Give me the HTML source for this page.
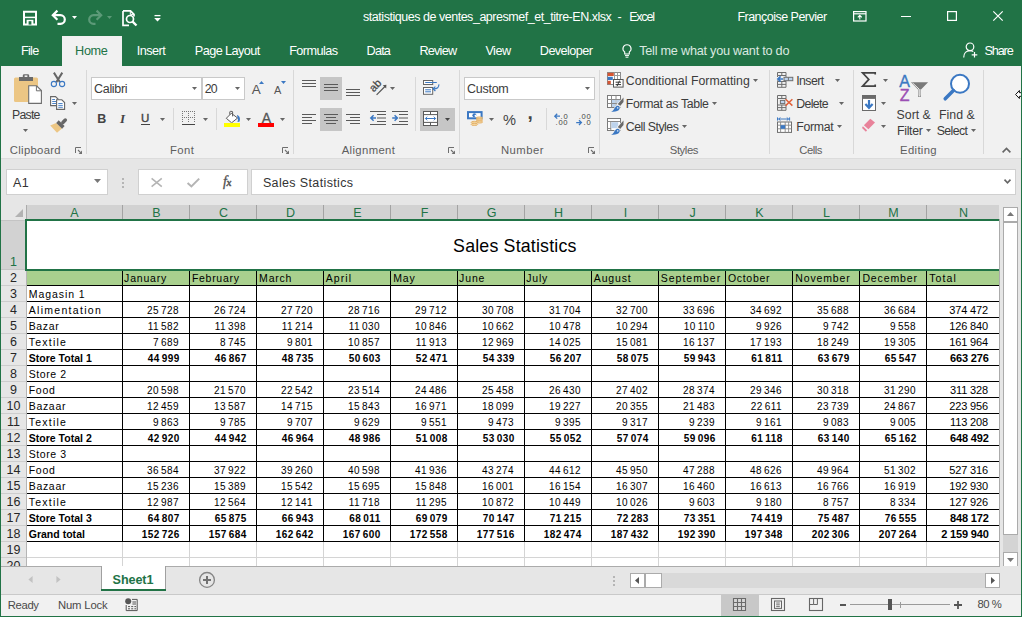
<!DOCTYPE html>
<html><head><meta charset="utf-8"><title>Excel</title>
<style>
*{box-sizing:border-box;margin:0;padding:0}
html,body{width:1022px;height:617px;overflow:hidden;background:#e6e6e6;font-family:"Liberation Sans",sans-serif;}
#w{position:relative;width:1022px;height:617px;overflow:hidden;background:#e6e6e6}
.abs{position:absolute}
svg{overflow:visible}
.t{position:absolute;white-space:nowrap;line-height:16px}
.sep{position:absolute;width:1px;background:#d8d8d8}
.ch{position:absolute;top:205px;height:14px;background:#d2d2d2;color:#217346;font-size:12.5px;text-align:center;line-height:17px;padding-left:2px}
.rh{position:absolute;left:1px;width:25px;color:#262626;font-size:12.5px;text-align:center;line-height:17px;height:16px;background:#e6e6e6}
.c{position:absolute;font-size:10.5px;color:#000;white-space:nowrap;line-height:16px;height:16px}
.n{text-align:right;font-size:10px;letter-spacing:.44px;line-height:17px}
.nn{text-align:right;font-size:11px;letter-spacing:-.1px}
.g{display:inline-block;width:2px}
.g2{display:inline-block;width:2.6px}
.b{font-weight:bold}
</style></head><body><div id="w">

<div class="abs" style="left:0px;top:0px;width:1022px;height:66px;background:#217346;"></div>
<div class="abs" style="left:62px;top:36px;width:60px;height:30px;background:#f1f1f1;"></div>
<svg class="abs" style="left:23px;top:11px" width="14" height="14" viewBox="0 0 14 14"><path d="M1 0.8H13V13.4H1Z" fill="none" stroke="#fff" stroke-width="2"/><path d="M2 6.4H12" stroke="#fff" stroke-width="1.5"/><path d="M3.6 13.6V8.8H10.4V13.6Z" fill="#fff"/><rect x="5.6" y="10.2" width="2.8" height="3.4" fill="#217346"/></svg>
<svg class="abs" style="left:51px;top:10px" width="16" height="15" viewBox="0 0 16 15"><path d="M2 5.2H9.5A4.3 4.3 0 0 1 9.5 13.8H6.5" fill="none" stroke="#fff" stroke-width="2.2"/><path d="M6.4 0.6L1.8 5.2L6.4 9.8" fill="none" stroke="#fff" stroke-width="2.2"/></svg>
<svg class="abs" style="left:72px;top:16px" width="5" height="3" viewBox="0 0 5 3"><path d="M0 0H5L2.5 3Z" fill="#fff"/></svg>
<svg class="abs" style="left:87px;top:10px" width="16" height="15" viewBox="0 0 16 15"><path d="M14 5.2H6.5A4.3 4.3 0 0 0 6.5 13.8H8.5" fill="none" stroke="#5c9a78" stroke-width="2.2"/><path d="M9.6 0.6L14.2 5.2L9.6 9.8" fill="none" stroke="#5c9a78" stroke-width="2.2"/></svg>
<svg class="abs" style="left:107px;top:16px" width="5" height="3" viewBox="0 0 5 3"><path d="M0 0H5L2.5 3Z" fill="#5c9a78"/></svg>
<svg class="abs" style="left:122px;top:10px" width="16" height="17" viewBox="0 0 16 17"><path d="M1 0.9H8.5L12 4.4V6.5M1 0.9V15.3H7" fill="none" stroke="#fff" stroke-width="1.7"/><path d="M8.3 0.9V4.4H11.8" fill="none" stroke="#fff" stroke-width="1"/><circle cx="8" cy="9" r="3.5" fill="none" stroke="#fff" stroke-width="1.7"/><path d="M10.6 11.6L14.5 15.5" stroke="#fff" stroke-width="2.3"/></svg>
<svg class="abs" style="left:154px;top:15px" width="7" height="7" viewBox="0 0 7 7"><path d="M0.5 0.6H6.5" stroke="#fff" stroke-width="1.3"/><path d="M0.2 3H6.8L3.5 6.4Z" fill="#fff"/></svg>
<div class="t" style="left:363.10px;top:9px;font-size:12.5px;color:#fff;letter-spacing:-0.473px;line-height:16px;height:16px;">statistiques de ventes_apresmef_et_titre-EN.xlsx</div>
<div class="t" style="left:617.40px;top:9px;font-size:12.5px;color:#fff;letter-spacing:0.000px;line-height:16px;height:16px;">-</div>
<div class="t" style="left:629.20px;top:9px;font-size:12.5px;color:#fff;letter-spacing:-1.212px;line-height:16px;height:16px;">Excel</div>
<div class="t" style="left:737.40px;top:9px;font-size:12.5px;color:#fff;letter-spacing:-0.515px;line-height:16px;height:16px;">Françoise Pervier</div>
<svg class="abs" style="left:853px;top:11px" width="14" height="11" viewBox="0 0 14 11"><rect x="0.6" y="0.6" width="12.4" height="9.4" fill="none" stroke="#fff" stroke-width="1.2"/><path d="M0.6 2.8H13" stroke="#fff" stroke-width="1.2"/><path d="M6.8 8.5V4.6M4.8 6.4L6.8 4.4L8.8 6.4" fill="none" stroke="#fff" stroke-width="1.1"/></svg>
<div class="abs" style="left:901px;top:16px;width:10px;height:1px;background:#fff;"></div>
<svg class="abs" style="left:947px;top:11px" width="10" height="10" viewBox="0 0 10 10"><rect x="0.6" y="0.6" width="8.8" height="8.8" fill="none" stroke="#fff" stroke-width="1.2"/></svg>
<svg class="abs" style="left:993px;top:11px" width="10" height="10" viewBox="0 0 10 10"><path d="M0.3 0.3L9.7 9.7M9.7 0.3L0.3 9.7" stroke="#fff" stroke-width="1.2"/></svg>
<div class="t" style="left:20.90px;top:43px;font-size:12.7px;color:#fff;letter-spacing:-0.715px;line-height:16px;height:16px;">File</div>
<div class="t" style="left:75.10px;top:43px;font-size:12.7px;color:#217346;letter-spacing:-0.353px;line-height:16px;height:16px;">Home</div>
<div class="t" style="left:136.80px;top:43px;font-size:12.7px;color:#fff;letter-spacing:-0.569px;line-height:16px;height:16px;">Insert</div>
<div class="t" style="left:194.80px;top:43px;font-size:12.7px;color:#fff;letter-spacing:-0.580px;line-height:16px;height:16px;">Page Layout</div>
<div class="t" style="left:289.20px;top:43px;font-size:12.7px;color:#fff;letter-spacing:-0.573px;line-height:16px;height:16px;">Formulas</div>
<div class="t" style="left:366.60px;top:43px;font-size:12.7px;color:#fff;letter-spacing:-0.836px;line-height:16px;height:16px;">Data</div>
<div class="t" style="left:419.40px;top:43px;font-size:12.7px;color:#fff;letter-spacing:-0.784px;line-height:16px;height:16px;">Review</div>
<div class="t" style="left:485.40px;top:43px;font-size:12.7px;color:#fff;letter-spacing:-0.526px;line-height:16px;height:16px;">View</div>
<div class="t" style="left:539.80px;top:43px;font-size:12.7px;color:#fff;letter-spacing:-0.584px;line-height:16px;height:16px;">Developer</div>
<div class="t" style="left:639.20px;top:43px;font-size:12.7px;color:#dbe9e0;letter-spacing:-0.242px;line-height:16px;height:16px;">Tell me what you want to do</div>
<div class="t" style="left:984.40px;top:43px;font-size:12.7px;color:#fff;letter-spacing:-1.118px;line-height:16px;height:16px;">Share</div>
<svg class="abs" style="left:622px;top:44px" width="10" height="14" viewBox="0 0 10 14"><path d="M5 0.7A4 4 0 0 1 7.3 8V10H2.7V8A4 4 0 0 1 5 0.7Z" fill="none" stroke="#fff" stroke-width="1.1"/><path d="M3 11.6H7M3.6 13.2H6.4" stroke="#fff" stroke-width="1"/></svg>
<svg class="abs" style="left:963px;top:42px" width="16" height="16" viewBox="0 0 16 16"><circle cx="7" cy="4.8" r="3.8" fill="none" stroke="#fff" stroke-width="1.2"/><path d="M0.7 15.5C0.7 11 3.5 8.6 7 8.6C8.3 8.6 9.4 9 10.3 9.6" fill="none" stroke="#fff" stroke-width="1.2"/><path d="M11.5 10V15.6M8.7 12.8H14.3" stroke="#fff" stroke-width="1.2"/></svg>
<div class="abs" style="left:1px;top:66px;width:1020px;height:92px;background:#f1f1f1;"></div>
<div class="abs" style="left:1px;top:158px;width:1020px;height:1px;background:#dcdcdc;"></div>
<div class="sep" style="left:86px;top:70px;height:84px"></div>
<div class="sep" style="left:293px;top:70px;height:84px"></div>
<div class="sep" style="left:459px;top:70px;height:84px"></div>
<div class="sep" style="left:599px;top:70px;height:84px"></div>
<div class="sep" style="left:769px;top:70px;height:84px"></div>
<div class="sep" style="left:853px;top:70px;height:84px"></div>
<div class="sep" style="left:983px;top:70px;height:84px"></div>
<div class="sep" style="left:173px;top:108px;height:22px"></div>
<div class="sep" style="left:216px;top:108px;height:22px"></div>
<div class="sep" style="left:415px;top:77px;height:54px"></div>
<div class="sep" style="left:546px;top:108px;height:22px"></div>
<div class="t" style="left:9.80px;top:143px;font-size:11.3px;color:#5e5e5e;letter-spacing:0.306px;line-height:14px;height:14px;">Clipboard</div>
<div class="t" style="left:169.90px;top:143px;font-size:11.3px;color:#5e5e5e;letter-spacing:0.436px;line-height:14px;height:14px;">Font</div>
<div class="t" style="left:341.70px;top:143px;font-size:11.3px;color:#5e5e5e;letter-spacing:0.371px;line-height:14px;height:14px;">Alignment</div>
<div class="t" style="left:500.90px;top:143px;font-size:11.3px;color:#5e5e5e;letter-spacing:0.506px;line-height:14px;height:14px;">Number</div>
<div class="t" style="left:669.80px;top:143px;font-size:11.3px;color:#5e5e5e;letter-spacing:-0.430px;line-height:14px;height:14px;">Styles</div>
<div class="t" style="left:799.20px;top:143px;font-size:11.3px;color:#5e5e5e;letter-spacing:-0.449px;line-height:14px;height:14px;">Cells</div>
<div class="t" style="left:900.10px;top:143px;font-size:11.3px;color:#5e5e5e;letter-spacing:0.328px;line-height:14px;height:14px;">Editing</div>
<svg class="abs" style="left:75px;top:147px" width="7" height="7" viewBox="0 0 7 7"><path d="M0.5 6V0.5H6" fill="none" stroke="#6e6e6e" stroke-width="1"/><path d="M3 3L5.6 5.6" stroke="#6e6e6e" stroke-width="1.1"/><path d="M7 3.6V7H3.6Z" fill="#6e6e6e"/></svg>
<svg class="abs" style="left:282px;top:147px" width="7" height="7" viewBox="0 0 7 7"><path d="M0.5 6V0.5H6" fill="none" stroke="#6e6e6e" stroke-width="1"/><path d="M3 3L5.6 5.6" stroke="#6e6e6e" stroke-width="1.1"/><path d="M7 3.6V7H3.6Z" fill="#6e6e6e"/></svg>
<svg class="abs" style="left:448px;top:147px" width="7" height="7" viewBox="0 0 7 7"><path d="M0.5 6V0.5H6" fill="none" stroke="#6e6e6e" stroke-width="1"/><path d="M3 3L5.6 5.6" stroke="#6e6e6e" stroke-width="1.1"/><path d="M7 3.6V7H3.6Z" fill="#6e6e6e"/></svg>
<svg class="abs" style="left:588px;top:147px" width="7" height="7" viewBox="0 0 7 7"><path d="M0.5 6V0.5H6" fill="none" stroke="#6e6e6e" stroke-width="1"/><path d="M3 3L5.6 5.6" stroke="#6e6e6e" stroke-width="1.1"/><path d="M7 3.6V7H3.6Z" fill="#6e6e6e"/></svg>
<svg class="abs" style="left:14px;top:74px" width="29" height="31" viewBox="0 0 29 31"><rect x="0" y="3.5" width="24" height="24.5" rx="1.5" fill="#ecc684"/>
<path d="M5 6.9V3H8.8V1.6A1.4 1.4 0 0 1 10.2 0.2H13.8A1.4 1.4 0 0 1 15.2 1.6V3H19V6.9Z" fill="#6a6a6a"/><rect x="10.6" y="1.4" width="2.8" height="1.6" fill="#f1f1f1"/>
<path d="M14.7 11.8H22.6L27.4 16.6V29.4H14.7Z" fill="#fff" stroke="#6e6e6e" stroke-width="1.1"/><path d="M22.4 12V16.8H27.2" fill="none" stroke="#6e6e6e" stroke-width="1"/></svg>
<div class="t" style="left:12.10px;top:107px;font-size:12.3px;color:#3c3c3c;letter-spacing:-0.783px;line-height:16px;height:16px;">Paste</div>
<svg class="abs" style="left:23px;top:129px" width="5" height="3" viewBox="0 0 5 3"><path d="M0 0H5L2.5 3Z" fill="#666"/></svg>
<svg class="abs" style="left:50px;top:72px" width="16" height="15" viewBox="0 0 16 15"><path d="M3.9 0.6L9.9 10.2M12.3 0.6L6.3 10.2" stroke="#666" stroke-width="2" fill="none"/>
<circle cx="3.9" cy="12" r="2.6" fill="#f1f1f1" stroke="#3b78c3" stroke-width="1.1"/><circle cx="12.1" cy="12" r="2.6" fill="#f1f1f1" stroke="#3b78c3" stroke-width="1.1"/></svg>
<svg class="abs" style="left:50px;top:96px" width="16" height="14" viewBox="0 0 16 14"><path d="M0.6 0.6H5.5L8 3.1V9.6H0.6Z" fill="#fff" stroke="#666" stroke-width="1.1"/>
<path d="M2.2 3.5H5M2.2 5.5H6M2.2 7.5H6" stroke="#3b78c3" stroke-width="0.9"/>
<path d="M6.6 3.8H11.8L14.6 6.6V13.4H6.6Z" fill="#fff" stroke="#666" stroke-width="1.1"/>
<path d="M8.3 7.5H12.6M8.3 9.4H12.8M8.3 11.3H12.8" stroke="#3b78c3" stroke-width="0.9"/></svg>
<svg class="abs" style="left:72px;top:102px" width="5" height="3" viewBox="0 0 5 3"><path d="M0 0H5L2.5 3Z" fill="#666"/></svg>
<svg class="abs" style="left:50px;top:118px" width="17" height="15" viewBox="0 0 17 15"><path d="M6.1 5.1L12 10.6L7 14.8L0.2 7.5Z" fill="#ecc684"/>
<path d="M6.2 4.9L8.7 2.3L14.6 8.1L12.1 10.8Z" fill="#666"/>
<path d="M12.9 4.5L15.3 2.1" stroke="#666" stroke-width="3.5" stroke-linecap="round"/></svg>
<div class="abs" style="left:91px;top:77px;width:111px;height:23px;background:#fff;border:1px solid #c9c9c9"></div>
<div class="abs" style="left:202px;top:77px;width:43px;height:23px;background:#fff;border:1px solid #c9c9c9"></div>
<div class="t" style="left:94.10px;top:81px;font-size:12.5px;color:#3c3c3c;letter-spacing:-0.334px;line-height:16px;height:16px;">Calibri</div>
<svg class="abs" style="left:192px;top:87px" width="5" height="3" viewBox="0 0 5 3"><path d="M0 0H5L2.5 3Z" fill="#666"/></svg>
<div class="t" style="left:204.70px;top:81px;font-size:12.3px;color:#3c3c3c;letter-spacing:-0.800px;line-height:16px;height:16px;">20</div>
<svg class="abs" style="left:235px;top:87px" width="5" height="3" viewBox="0 0 5 3"><path d="M0 0H5L2.5 3Z" fill="#666"/></svg>
<div class="t" style="left:251.70px;top:81px;font-size:13.5px;color:#555;letter-spacing:0.000px;line-height:17px;height:17px;">A</div>
<svg class="abs" style="left:259px;top:81px" width="5" height="3" viewBox="0 0 5 3"><path d="M0 3H5L2.5 0Z" fill="#3b78c3"/></svg>
<div class="t" style="left:274.00px;top:83px;font-size:11px;color:#555;letter-spacing:0.000px;line-height:14px;height:14px;">A</div>
<svg class="abs" style="left:281px;top:81px" width="5" height="3" viewBox="0 0 5 3"><path d="M0 0H5L2.5 3Z" fill="#3b78c3"/></svg>
<div class="t" style="left:97.30px;top:111px;font-size:12.5px;color:#444;letter-spacing:0.000px;line-height:16px;height:16px;font-weight:bold;">B</div>
<div class="t" style="left:119.90px;top:111px;font-size:12px;color:#444;letter-spacing:0.000px;line-height:16px;height:16px;font-style:italic;font-family:'Liberation Serif',serif;font-weight:bold;font-size:13px;">I</div>
<div class="t" style="left:140.90px;top:111px;font-size:11.5px;color:#444;letter-spacing:0.000px;line-height:14px;height:14px;-webkit-text-stroke:0.4px #444;">U</div>
<div class="abs" style="left:141px;top:124px;width:9px;height:1px;background:#444;"></div>
<svg class="abs" style="left:160px;top:118px" width="5" height="3" viewBox="0 0 5 3"><path d="M0 0H5L2.5 3Z" fill="#666"/></svg>
<svg class="abs" style="left:182px;top:111px" width="14" height="14" viewBox="0 0 14 14"><path d="M0 0.5H13M0 6.5H13M0.5 0V12M6.5 0V12M12.5 0V12" stroke="#777" stroke-width="1" stroke-dasharray="1 1" fill="none" shape-rendering="crispEdges"/><path d="M0 13.5H13" stroke="#444" stroke-width="1" shape-rendering="crispEdges"/></svg>
<svg class="abs" style="left:203px;top:118px" width="5" height="3" viewBox="0 0 5 3"><path d="M0 0H5L2.5 3Z" fill="#666"/></svg>
<svg class="abs" style="left:224px;top:110px" width="18" height="18" viewBox="0 0 18 18"><path d="M7.3 3.3L13.6 8L7.6 12.8L2.3 8.3Z" fill="#fff" stroke="#5a5a5a" stroke-width="1"/>
<path d="M5.8 4.6V2A0.6 0.6 0 0 1 6.4 1.4H8A0.6 0.6 0 0 1 8.6 2V6.4" fill="none" stroke="#5a5a5a" stroke-width="1"/>
<path d="M13 4.9C15.6 5.6 16.8 8.4 15.4 11.8L13.4 12C14.2 10.2 14 8.6 13.6 8Z" fill="#3b78c3"/>
<rect x="0" y="13" width="16" height="4" fill="#ffff00"/></svg>
<svg class="abs" style="left:246px;top:118px" width="5" height="3" viewBox="0 0 5 3"><path d="M0 0H5L2.5 3Z" fill="#666"/></svg>
<div class="t" style="left:261.80px;top:109px;font-size:14px;color:#555;letter-spacing:0.000px;line-height:18px;height:18px;-webkit-text-stroke:0.3px #555;">A</div>
<div class="abs" style="left:258px;top:123px;width:16px;height:4px;background:#ff0000;"></div>
<svg class="abs" style="left:280px;top:118px" width="5" height="3" viewBox="0 0 5 3"><path d="M0 0H5L2.5 3Z" fill="#666"/></svg>
<div class="abs" style="left:320px;top:77px;width:22px;height:23px;background:#c6c6c6;"></div>
<div class="abs" style="left:320px;top:108px;width:22px;height:23px;background:#c6c6c6;"></div>
<div class="abs" style="left:420px;top:108px;width:35px;height:23px;background:#c6c6c6;"></div>
<div class="abs" style="left:302px;top:80px;width:14px;height:1px;background:#5a5a5a;"></div>
<div class="abs" style="left:302px;top:83px;width:14px;height:1px;background:#5a5a5a;"></div>
<div class="abs" style="left:302px;top:86px;width:14px;height:1px;background:#5a5a5a;"></div>
<div class="abs" style="left:324px;top:84px;width:14px;height:1px;background:#5a5a5a;"></div>
<div class="abs" style="left:324px;top:87px;width:14px;height:1px;background:#5a5a5a;"></div>
<div class="abs" style="left:324px;top:90px;width:14px;height:1px;background:#5a5a5a;"></div>
<div class="abs" style="left:346px;top:89px;width:14px;height:1px;background:#5a5a5a;"></div>
<div class="abs" style="left:346px;top:92px;width:14px;height:1px;background:#5a5a5a;"></div>
<div class="abs" style="left:346px;top:95px;width:14px;height:1px;background:#5a5a5a;"></div>
<div class="abs" style="left:302px;top:114px;width:14px;height:1px;background:#5a5a5a;"></div>
<div class="abs" style="left:302px;top:117px;width:10px;height:1px;background:#5a5a5a;"></div>
<div class="abs" style="left:302px;top:120px;width:14px;height:1px;background:#5a5a5a;"></div>
<div class="abs" style="left:302px;top:123px;width:10px;height:1px;background:#5a5a5a;"></div>
<div class="abs" style="left:324px;top:114px;width:14px;height:1px;background:#5a5a5a;"></div>
<div class="abs" style="left:326px;top:117px;width:10px;height:1px;background:#5a5a5a;"></div>
<div class="abs" style="left:324px;top:120px;width:14px;height:1px;background:#5a5a5a;"></div>
<div class="abs" style="left:326px;top:123px;width:10px;height:1px;background:#5a5a5a;"></div>
<div class="abs" style="left:346px;top:114px;width:14px;height:1px;background:#5a5a5a;"></div>
<div class="abs" style="left:350px;top:117px;width:10px;height:1px;background:#5a5a5a;"></div>
<div class="abs" style="left:346px;top:120px;width:14px;height:1px;background:#5a5a5a;"></div>
<div class="abs" style="left:350px;top:123px;width:10px;height:1px;background:#5a5a5a;"></div>
<svg class="abs" style="left:369px;top:79px" width="18" height="17" viewBox="0 0 18 17"><text x="0" y="0" transform="translate(4.8,13.4) rotate(-47)" font-family="Liberation Sans" font-size="11" fill="#444" stroke="#444" stroke-width="0.25">ab</text>
<path d="M7.6 15.8L16.4 7" stroke="#555" stroke-width="1.2"/><path d="M17.4 5.8L17.2 9.6L13.8 6.2Z" fill="#555"/></svg>
<svg class="abs" style="left:390px;top:87px" width="5" height="3" viewBox="0 0 5 3"><path d="M0 0H5L2.5 3Z" fill="#666"/></svg>
<svg class="abs" style="left:370px;top:111px" width="16" height="14" viewBox="0 0 16 14"><path d="M0 0.5H16M7 3.5H16M7 7H16M7 10.5H16M0 13.5H16" stroke="#5a5a5a" stroke-width="1"/><path d="M6 7H1.2M3.6 4.2L0.8 7L3.6 9.8" fill="none" stroke="#3b78c3" stroke-width="1.5"/></svg>
<svg class="abs" style="left:392px;top:111px" width="16" height="14" viewBox="0 0 16 14"><path d="M0 0.5H16M7 3.5H16M7 7H16M7 10.5H16M0 13.5H16" stroke="#5a5a5a" stroke-width="1"/><path d="M0.2 7H5M2.6 4.2L5.4 7L2.6 9.8" fill="none" stroke="#3b78c3" stroke-width="1.5"/></svg>
<svg class="abs" style="left:423px;top:80px" width="17" height="15" viewBox="0 0 17 15"><rect x="0.5" y="0.5" width="9.2" height="4" fill="#fff" stroke="#666" stroke-width="1"/><rect x="0.5" y="7.5" width="9.2" height="6.8" fill="#fff" stroke="#666" stroke-width="1"/>
<path d="M2.2 2.5H13.8M2.2 9.8H8M2.2 11.8H8" stroke="#3b78c3" stroke-width="1"/>
<path d="M15.8 4.4C16.2 7.4 14.2 8.8 10.6 8.8" fill="none" stroke="#3b78c3" stroke-width="1.2"/><path d="M12.4 6.6L10 8.8L12.4 11" fill="none" stroke="#3b78c3" stroke-width="1.2"/></svg>
<svg class="abs" style="left:423px;top:111px" width="15" height="15" viewBox="0 0 15 15"><rect x="0.5" y="0.5" width="14" height="14" fill="#fff" stroke="#5a5a5a" stroke-width="1"/>
<path d="M0.5 3.6H14.5M0.5 11.4H14.5M7.5 0.5V3.6M7.5 11.4V14.5" stroke="#5a5a5a" stroke-width="1"/>
<path d="M2.4 7.5H12.6M4.2 5.7L2.4 7.5L4.2 9.3M10.8 5.7L12.6 7.5L10.8 9.3" fill="none" stroke="#3b78c3" stroke-width="1"/></svg>
<svg class="abs" style="left:445px;top:118px" width="5" height="3" viewBox="0 0 5 3"><path d="M0 0H5L2.5 3Z" fill="#444"/></svg>
<div class="abs" style="left:464px;top:77px;width:131px;height:23px;background:#fff;border:1px solid #c9c9c9"></div>
<div class="t" style="left:467.00px;top:81px;font-size:12.5px;color:#3c3c3c;letter-spacing:-0.269px;line-height:16px;height:16px;">Custom</div>
<svg class="abs" style="left:585px;top:87px" width="5" height="3" viewBox="0 0 5 3"><path d="M0 0H5L2.5 3Z" fill="#666"/></svg>
<svg class="abs" style="left:466px;top:111px" width="18" height="17" viewBox="0 0 18 17"><rect x="2" y="1.1" width="13.6" height="6.2" fill="#fff" stroke="#3b78c3" stroke-width="2"/><circle cx="8.4" cy="4.2" r="2" fill="#3b78c3"/><circle cx="9.6" cy="4.8" r="1.1" fill="#fff"/>
<ellipse cx="13.4" cy="7" rx="3.3" ry="1.1" fill="#f3d6a4" stroke="#e2ac5e" stroke-width="0.8"/><ellipse cx="13.4" cy="9" rx="3.3" ry="1.1" fill="#f3d6a4" stroke="#e2ac5e" stroke-width="0.8"/><ellipse cx="13.4" cy="11" rx="3.3" ry="1.1" fill="#f3d6a4" stroke="#e2ac5e" stroke-width="0.8"/>
<ellipse cx="8.4" cy="11.4" rx="3.3" ry="1.1" fill="#f3d6a4" stroke="#e2ac5e" stroke-width="0.8"/><ellipse cx="8.4" cy="13.4" rx="3.3" ry="1.1" fill="#f3d6a4" stroke="#e2ac5e" stroke-width="0.8"/></svg>
<svg class="abs" style="left:489px;top:118px" width="5" height="3" viewBox="0 0 5 3"><path d="M0 0H5L2.5 3Z" fill="#666"/></svg>
<div class="t" style="left:502.90px;top:111px;font-size:14.6px;color:#444;letter-spacing:0.000px;line-height:18px;height:18px;">%</div>
<div class="t" style="left:527.40px;top:101px;font-size:19px;color:#444;letter-spacing:0.000px;line-height:23px;height:23px;font-weight:bold;">,</div>
<svg class="abs" style="left:554px;top:112px" width="15" height="14" viewBox="0 0 15 14"><path d="M6 4.2H1M3.2 1.8L0.8 4.2L3.2 6.6" fill="none" stroke="#3b78c3" stroke-width="1.3"/>
<text x="6.6" y="6.6" font-family="Liberation Sans" font-size="7.6" fill="#444" letter-spacing="0.7">.0</text><text x="1.6" y="13.2" font-family="Liberation Sans" font-size="7.6" fill="#444" letter-spacing="0.7">.00</text></svg>
<svg class="abs" style="left:576px;top:112px" width="15" height="14" viewBox="0 0 15 14"><text x="2.8" y="6.6" font-family="Liberation Sans" font-size="7.6" fill="#444" letter-spacing="0.7">.00</text>
<path d="M0.2 10.6H5.2M3 8.2L5.4 10.6L3 13" fill="none" stroke="#3b78c3" stroke-width="1.3"/><text x="7.6" y="13.2" font-family="Liberation Sans" font-size="7.6" fill="#444" letter-spacing="0.7">.0</text></svg>
<svg class="abs" style="left:607px;top:72px" width="17" height="16" viewBox="0 0 17 16"><rect x="0.5" y="0.5" width="13" height="12" fill="#fff" stroke="#8a8a8a" stroke-width="1"/><path d="M7.5 0.5V7M10.5 0.5V7M7 3.5H13.5" stroke="#9a9a9a" stroke-width="1"/>
<rect x="0.6" y="0.8" width="6.2" height="3.2" fill="#d65532"/><rect x="0.6" y="4.8" width="5.2" height="3.2" fill="#3b78c3"/><rect x="0.6" y="8.8" width="3.2" height="3.4" fill="#d65532"/>
<rect x="6.5" y="7.5" width="9.6" height="7.6" fill="#fff" stroke="#555" stroke-width="1"/><path d="M8.6 10.2H14M8.6 12.6H14M12.6 8.6L10 14.2" stroke="#333" stroke-width="1"/></svg>
<svg class="abs" style="left:607px;top:95px" width="17" height="17" viewBox="0 0 17 17"><rect x="0.5" y="0.5" width="13" height="12" fill="#fff" stroke="#7a7a7a" stroke-width="1"/><path d="M0.5 4.5H13.5M0.5 8.5H13.5M4.5 0.5V12.5M9 0.5V12.5" stroke="#8a8a8a" stroke-width="1"/><rect x="5" y="5" width="3.5" height="3" fill="#bdd3ec"/><rect x="5" y="9" width="3.5" height="3" fill="#bdd3ec"/><rect x="9.5" y="5" width="3.5" height="3" fill="#bdd3ec"/><path d="M17.4 1.2V7.4L13.4 12.2L9.6 9Z" fill="#f1f1f1"/><path d="M16.5 2.6V7L13.1 11.1L10.8 9.1Z" fill="#696969"/><path d="M3.4 17.4C6.4 16.4 6.2 12 9.4 10.4C12 9.2 14.4 11.4 13.4 14.2C12.4 17.2 7.4 18 3.4 17.4Z" fill="#f1f1f1"/><path d="M4.1 16.7C7 16.2 7 12.4 9.6 11C11.6 10 13.4 11.6 12.6 13.8C11.6 16.6 7.6 17.1 4.1 16.7Z" fill="#3b78c3"/><circle cx="10.7" cy="12.9" r="0.8" fill="#cfe0f3"/></svg>
<svg class="abs" style="left:607px;top:118px" width="17" height="17" viewBox="0 0 17 17"><rect x="0.5" y="0.5" width="13" height="12" fill="#fff" stroke="#7a7a7a" stroke-width="1"/><path d="M0.5 3.5H13.5M0.5 10.5H4M3.8 3.5V12.5" stroke="#8a8a8a" stroke-width="1"/><rect x="4.4" y="4.2" width="6.8" height="6" fill="#bdd3ec"/><path d="M17.4 1.2V7.4L13.4 12.2L9.6 9Z" fill="#f1f1f1"/><path d="M16.5 2.6V7L13.1 11.1L10.8 9.1Z" fill="#696969"/><path d="M3.4 17.4C6.4 16.4 6.2 12 9.4 10.4C12 9.2 14.4 11.4 13.4 14.2C12.4 17.2 7.4 18 3.4 17.4Z" fill="#f1f1f1"/><path d="M4.1 16.7C7 16.2 7 12.4 9.6 11C11.6 10 13.4 11.6 12.6 13.8C11.6 16.6 7.6 17.1 4.1 16.7Z" fill="#3b78c3"/><circle cx="10.7" cy="12.9" r="0.8" fill="#cfe0f3"/></svg>
<div class="t" style="left:625.80px;top:73px;font-size:12.3px;color:#3c3c3c;letter-spacing:0.013px;line-height:16px;height:16px;">Conditional Formatting</div>
<svg class="abs" style="left:753px;top:79px" width="5" height="3" viewBox="0 0 5 3"><path d="M0 0H5L2.5 3Z" fill="#666"/></svg>
<div class="t" style="left:625.80px;top:96px;font-size:12.3px;color:#3c3c3c;letter-spacing:-0.346px;line-height:16px;height:16px;">Format as Table</div>
<svg class="abs" style="left:712px;top:102px" width="5" height="3" viewBox="0 0 5 3"><path d="M0 0H5L2.5 3Z" fill="#666"/></svg>
<div class="t" style="left:625.80px;top:119px;font-size:12.3px;color:#3c3c3c;letter-spacing:-0.508px;line-height:16px;height:16px;">Cell Styles</div>
<svg class="abs" style="left:682px;top:125px" width="5" height="3" viewBox="0 0 5 3"><path d="M0 0H5L2.5 3Z" fill="#666"/></svg>
<svg class="abs" style="left:777px;top:72px" width="16" height="16" viewBox="0 0 16 16"><path d="M0.5 0.5H9V3.5H0.5ZM4.8 0.5V3.5M0.5 3.5V5M9 3.5V5M0.5 9.5H9V15.3H0.5ZM4.8 9.5V15.3M0.5 12.4H9M0.5 8.4V9.5M9 8.6V9.5" stroke="#6e6e6e" stroke-width="1" fill="none"/>
<rect x="7" y="5.3" width="8.8" height="3.4" fill="#bdd3ec" stroke="#6e6e6e" stroke-width="1"/><path d="M11.4 5.3V8.7" stroke="#6e6e6e" stroke-width="1"/>
<path d="M6 7H1.4M3.6 4.4L0.9 7L3.6 9.6" fill="none" stroke="#3b78c3" stroke-width="1.7"/></svg>
<svg class="abs" style="left:777px;top:95px" width="16" height="16" viewBox="0 0 16 16"><path d="M0.5 0.5H9V3.5H0.5ZM4.8 0.5V3.5M0.5 3.5V10M0.5 10H9V15.3H0.5ZM4.8 10V15.3M0.5 12.6H9M9 3.5V4.6" stroke="#6e6e6e" stroke-width="1" fill="none"/>
<rect x="3.4" y="5.4" width="4.4" height="3.2" fill="#bdd3ec" stroke="#6e6e6e" stroke-width="1"/>
<path d="M8.6 4.2L15.4 10.6M15.4 4.2L8.6 10.6" stroke="#e0603a" stroke-width="1.5"/></svg>
<svg class="abs" style="left:777px;top:117px" width="16" height="17" viewBox="0 0 16 17"><path d="M0.5 0.4V3.6M12.6 0.4V3.6M1.6 2H11.6M3.4 0.6L1.6 2L3.4 3.4M9.8 0.6L11.6 2L9.8 3.4" fill="none" stroke="#3b78c3" stroke-width="1"/>
<rect x="0.5" y="5" width="14" height="10.4" fill="#fff" stroke="#6e6e6e" stroke-width="1"/><path d="M0.5 8.2H14.5M0.5 11.8H14.5M3.6 5V15.4M8.2 5V15.4M11.6 5V15.4" stroke="#8a8a8a" stroke-width="0.9"/>
<rect x="3.6" y="8.2" width="4.6" height="3.6" fill="#3b78c3"/></svg>
<div class="t" style="left:796.20px;top:73px;font-size:12.3px;color:#3c3c3c;letter-spacing:-0.568px;line-height:16px;height:16px;">Insert</div>
<svg class="abs" style="left:835px;top:79px" width="5" height="3" viewBox="0 0 5 3"><path d="M0 0H5L2.5 3Z" fill="#666"/></svg>
<div class="t" style="left:796.20px;top:96px;font-size:12.3px;color:#3c3c3c;letter-spacing:-0.627px;line-height:16px;height:16px;">Delete</div>
<svg class="abs" style="left:839px;top:102px" width="5" height="3" viewBox="0 0 5 3"><path d="M0 0H5L2.5 3Z" fill="#666"/></svg>
<div class="t" style="left:796.20px;top:119px;font-size:12.3px;color:#3c3c3c;letter-spacing:-0.307px;line-height:16px;height:16px;">Format</div>
<svg class="abs" style="left:837px;top:125px" width="5" height="3" viewBox="0 0 5 3"><path d="M0 0H5L2.5 3Z" fill="#666"/></svg>
<svg class="abs" style="left:861px;top:72px" width="15" height="15" viewBox="0 0 15 15"><path d="M14.2 2.6V0.9H1.6L7.8 7.4L1.6 14.1H14.2V12.4" fill="none" stroke="#444" stroke-width="1.7"/></svg>
<svg class="abs" style="left:883px;top:79px" width="5" height="3" viewBox="0 0 5 3"><path d="M0 0H5L2.5 3Z" fill="#666"/></svg>
<svg class="abs" style="left:862px;top:95px" width="14" height="16" viewBox="0 0 14 16"><rect x="0.5" y="0.5" width="13" height="15" fill="#fff" stroke="#6a6a6a" stroke-width="1"/><rect x="0.5" y="0.5" width="13" height="3.4" fill="#6a6a6a"/><path d="M7 5V12.6M3.4 9L7 12.8L10.6 9" fill="none" stroke="#3b78c3" stroke-width="2.2"/></svg>
<svg class="abs" style="left:881px;top:102px" width="5" height="3" viewBox="0 0 5 3"><path d="M0 0H5L2.5 3Z" fill="#666"/></svg>
<svg class="abs" style="left:862px;top:118px" width="14" height="14" viewBox="0 0 14 14"><path d="M8.3 0.7L13 4.5L6.4 11.2L1.9 7.2Z" fill="#e8829a"/><path d="M0.9 8.3L5.1 12.2L3.9 13.8L0 10Z" fill="#e8829a"/></svg>
<svg class="abs" style="left:881px;top:125px" width="5" height="3" viewBox="0 0 5 3"><path d="M0 0H5L2.5 3Z" fill="#666"/></svg>
<div class="t" style="left:899.20px;top:72px;font-size:16px;color:#3b78c3;letter-spacing:0.000px;line-height:19px;height:19px;-webkit-text-stroke:0.35px #3b78c3;">A</div>
<div class="t" style="left:899.80px;top:86px;font-size:16px;color:#9b4fb4;letter-spacing:0.000px;line-height:19px;height:19px;-webkit-text-stroke:0.35px #9b4fb4;">Z</div>
<svg class="abs" style="left:911px;top:82px" width="17" height="15" viewBox="0 0 17 15"><path d="M0 0.2H17.1L10 7.4V14.7H7V7.4Z" fill="#7a7a7a"/><path d="M1.6 1L8 7V13.8H9V7.2" fill="none" stroke="#f1f1f1" stroke-width="1"/></svg>
<div class="t" style="left:896.60px;top:107px;font-size:12.3px;color:#3c3c3c;letter-spacing:0.008px;line-height:16px;height:16px;">Sort &</div>
<div class="t" style="left:897.10px;top:123px;font-size:12.3px;color:#3c3c3c;letter-spacing:-0.323px;line-height:16px;height:16px;">Filter</div>
<svg class="abs" style="left:925.5px;top:129px" width="5" height="3" viewBox="0 0 5 3"><path d="M0 0H5L2.5 3Z" fill="#666"/></svg>
<svg class="abs" style="left:943px;top:73px" width="28" height="28" viewBox="0 0 28 28"><circle cx="17" cy="10.8" r="9" fill="#fff" stroke="#3b78c3" stroke-width="2"/><path d="M10.4 17.6L2.2 25.8" stroke="#3b78c3" stroke-width="3.5" stroke-linecap="round"/></svg>
<div class="t" style="left:939.00px;top:107px;font-size:12.3px;color:#3c3c3c;letter-spacing:0.034px;line-height:16px;height:16px;">Find &</div>
<div class="t" style="left:936.70px;top:123px;font-size:12.3px;color:#3c3c3c;letter-spacing:-0.593px;line-height:16px;height:16px;">Select</div>
<svg class="abs" style="left:971px;top:129px" width="5" height="3" viewBox="0 0 5 3"><path d="M0 0H5L2.5 3Z" fill="#666"/></svg>
<svg class="abs" style="left:1002px;top:147px" width="9" height="6" viewBox="0 0 9 6"><path d="M0.6 5.4L4.5 1.4L8.4 5.4" fill="none" stroke="#666" stroke-width="1.6"/></svg>
<svg class="abs" style="left:1015px;top:90px" width="7" height="9" viewBox="0 0 7 9"><path d="M0.6 4.5L4.4 0.5V2.7H7.5V6.3H4.4V8.5Z" fill="#fff" stroke="#111" stroke-width="1"/></svg>
<div class="abs" style="left:6px;top:169px;width:102px;height:26px;background:#fff;border:1px solid #d0d0d0"></div>
<div class="t" style="left:12.90px;top:175px;font-size:12.5px;color:#333;letter-spacing:0.630px;line-height:16px;height:16px;">A1</div>
<svg class="abs" style="left:94px;top:179px" width="7" height="4" viewBox="0 0 7 4"><path d="M0 0H7L3.5 4Z" fill="#777"/></svg>
<div class="abs" style="left:122px;top:178px;width:2px;height:2px;background:#b5b5b5;"></div>
<div class="abs" style="left:122px;top:182px;width:2px;height:2px;background:#b5b5b5;"></div>
<div class="abs" style="left:122px;top:186px;width:2px;height:2px;background:#b5b5b5;"></div>
<div class="abs" style="left:138px;top:169px;width:110px;height:26px;background:#fff;border:1px solid #d0d0d0"></div>
<svg class="abs" style="left:151px;top:178px" width="12" height="9" viewBox="0 0 12 9"><path d="M0.6 0.4L10.8 8.6M10.8 0.4L0.6 8.6" stroke="#b4b4b4" stroke-width="1.6"/></svg>
<svg class="abs" style="left:187px;top:178px" width="13" height="9" viewBox="0 0 13 9"><path d="M0.6 5L4.4 8.4L12.2 0.6" fill="none" stroke="#b4b4b4" stroke-width="2"/></svg>
<div class="t" style="left:223px;top:174px;font-family:'Liberation Serif',serif;font-style:italic;font-size:14px;color:#505050;letter-spacing:-0.3px;-webkit-text-stroke:0.3px #505050">f<span style="font-size:10px;font-weight:bold">x</span></div>
<div class="abs" style="left:251px;top:169px;width:765px;height:26px;background:#fff;border:1px solid #d0d0d0"></div>
<div class="t" style="left:262.90px;top:175px;font-size:12.5px;color:#333;letter-spacing:0.364px;line-height:16px;height:16px;">Sales Statistics</div>
<svg class="abs" style="left:1004px;top:179px" width="7" height="5" viewBox="0 0 7 5"><path d="M0.5 0.6L3.5 3.8L6.5 0.6" fill="none" stroke="#666" stroke-width="1.6"/></svg>
<div class="abs" style="left:27px;top:219px;width:972px;height:347px;background:#fff;"></div>
<div class="abs" style="left:1px;top:205px;width:25px;height:14px;background:#e6e6e6;"></div>
<svg class="abs" style="left:15px;top:209px" width="8" height="8" viewBox="0 0 8 8"><path d="M8 0V8H0Z" fill="#b2b2b2"/></svg>
<div class="ch" style="left:27px;width:95px;padding-left:0">A</div>
<div class="ch" style="left:122px;width:67px">B</div>
<div class="ch" style="left:189px;width:67px">C</div>
<div class="ch" style="left:256px;width:67px">D</div>
<div class="ch" style="left:323px;width:67px">E</div>
<div class="ch" style="left:390px;width:67px">F</div>
<div class="ch" style="left:457px;width:67px">G</div>
<div class="ch" style="left:524px;width:67px">H</div>
<div class="ch" style="left:591px;width:67px">I</div>
<div class="ch" style="left:658px;width:67px">J</div>
<div class="ch" style="left:725px;width:67px">K</div>
<div class="ch" style="left:792px;width:67px">L</div>
<div class="ch" style="left:859px;width:67px">M</div>
<div class="ch" style="left:926px;width:73px">N</div>
<div class="abs" style="left:122px;top:205px;width:1px;height:14px;background:#a3a3a3;"></div>
<div class="abs" style="left:189px;top:205px;width:1px;height:14px;background:#a3a3a3;"></div>
<div class="abs" style="left:256px;top:205px;width:1px;height:14px;background:#a3a3a3;"></div>
<div class="abs" style="left:323px;top:205px;width:1px;height:14px;background:#a3a3a3;"></div>
<div class="abs" style="left:390px;top:205px;width:1px;height:14px;background:#a3a3a3;"></div>
<div class="abs" style="left:457px;top:205px;width:1px;height:14px;background:#a3a3a3;"></div>
<div class="abs" style="left:524px;top:205px;width:1px;height:14px;background:#a3a3a3;"></div>
<div class="abs" style="left:591px;top:205px;width:1px;height:14px;background:#a3a3a3;"></div>
<div class="abs" style="left:658px;top:205px;width:1px;height:14px;background:#a3a3a3;"></div>
<div class="abs" style="left:725px;top:205px;width:1px;height:14px;background:#a3a3a3;"></div>
<div class="abs" style="left:792px;top:205px;width:1px;height:14px;background:#a3a3a3;"></div>
<div class="abs" style="left:859px;top:205px;width:1px;height:14px;background:#a3a3a3;"></div>
<div class="abs" style="left:926px;top:205px;width:1px;height:14px;background:#a3a3a3;"></div>
<div class="abs" style="left:26px;top:205px;width:1px;height:14px;background:#ababab;"></div>
<div class="abs" style="left:1px;top:220px;width:25px;height:1px;background:#c4c4c4;"></div>
<div class="rh" style="top:221px;height:48px;background:#d2d2d2;color:#217346;padding-top:33px">1</div>
<div class="abs" style="left:1px;top:269px;width:25px;height:1px;background:#c4c4c4;"></div>
<div class="rh" style="top:270px">2</div>
<div class="abs" style="left:1px;top:285px;width:25px;height:1px;background:#cdcdcd;"></div>
<div class="rh" style="top:286px">3</div>
<div class="abs" style="left:1px;top:301px;width:25px;height:1px;background:#cdcdcd;"></div>
<div class="rh" style="top:302px">4</div>
<div class="abs" style="left:1px;top:317px;width:25px;height:1px;background:#cdcdcd;"></div>
<div class="rh" style="top:318px">5</div>
<div class="abs" style="left:1px;top:333px;width:25px;height:1px;background:#cdcdcd;"></div>
<div class="rh" style="top:334px">6</div>
<div class="abs" style="left:1px;top:349px;width:25px;height:1px;background:#cdcdcd;"></div>
<div class="rh" style="top:350px">7</div>
<div class="abs" style="left:1px;top:365px;width:25px;height:1px;background:#cdcdcd;"></div>
<div class="rh" style="top:366px">8</div>
<div class="abs" style="left:1px;top:381px;width:25px;height:1px;background:#cdcdcd;"></div>
<div class="rh" style="top:382px">9</div>
<div class="abs" style="left:1px;top:397px;width:25px;height:1px;background:#cdcdcd;"></div>
<div class="rh" style="top:398px">10</div>
<div class="abs" style="left:1px;top:413px;width:25px;height:1px;background:#cdcdcd;"></div>
<div class="rh" style="top:414px">11</div>
<div class="abs" style="left:1px;top:429px;width:25px;height:1px;background:#cdcdcd;"></div>
<div class="rh" style="top:430px">12</div>
<div class="abs" style="left:1px;top:445px;width:25px;height:1px;background:#cdcdcd;"></div>
<div class="rh" style="top:446px">13</div>
<div class="abs" style="left:1px;top:461px;width:25px;height:1px;background:#cdcdcd;"></div>
<div class="rh" style="top:462px">14</div>
<div class="abs" style="left:1px;top:477px;width:25px;height:1px;background:#cdcdcd;"></div>
<div class="rh" style="top:478px">15</div>
<div class="abs" style="left:1px;top:493px;width:25px;height:1px;background:#cdcdcd;"></div>
<div class="rh" style="top:494px">16</div>
<div class="abs" style="left:1px;top:509px;width:25px;height:1px;background:#cdcdcd;"></div>
<div class="rh" style="top:510px">17</div>
<div class="abs" style="left:1px;top:525px;width:25px;height:1px;background:#cdcdcd;"></div>
<div class="rh" style="top:526px">18</div>
<div class="abs" style="left:1px;top:541px;width:25px;height:1px;background:#cdcdcd;"></div>
<div class="rh" style="top:542px">19</div>
<div class="abs" style="left:1px;top:557px;width:25px;height:1px;background:#cdcdcd;"></div>
<div class="rh" style="top:558px">20</div>
<div class="abs" style="left:1px;top:573px;width:25px;height:1px;background:#cdcdcd;"></div>
<div class="abs" style="left:26px;top:221px;width:1px;height:345px;background:#b5b5b5;"></div>
<div class="abs" style="left:27px;top:270px;width:972px;height:16px;background:#a9d08e;"></div>
<div class="t" style="left:124.10px;top:271px;font-size:10.5px;color:#000;letter-spacing:0.811px;line-height:14px;height:14px;">January</div>
<div class="t" style="left:191.90px;top:271px;font-size:10.5px;color:#000;letter-spacing:0.715px;line-height:14px;height:14px;">February</div>
<div class="t" style="left:259.10px;top:271px;font-size:10.5px;color:#000;letter-spacing:0.787px;line-height:14px;height:14px;">March</div>
<div class="t" style="left:325.70px;top:271px;font-size:10.5px;color:#000;letter-spacing:1.078px;line-height:14px;height:14px;">April</div>
<div class="t" style="left:393.20px;top:271px;font-size:10.5px;color:#000;letter-spacing:0.892px;line-height:14px;height:14px;">May</div>
<div class="t" style="left:459.10px;top:271px;font-size:10.5px;color:#000;letter-spacing:0.850px;line-height:14px;height:14px;">June</div>
<div class="t" style="left:526.30px;top:271px;font-size:10.5px;color:#000;letter-spacing:0.749px;line-height:14px;height:14px;">July</div>
<div class="t" style="left:593.80px;top:271px;font-size:10.5px;color:#000;letter-spacing:0.846px;line-height:14px;height:14px;">August</div>
<div class="t" style="left:660.70px;top:271px;font-size:10.5px;color:#000;letter-spacing:1.020px;line-height:14px;height:14px;">September</div>
<div class="t" style="left:727.90px;top:271px;font-size:10.5px;color:#000;letter-spacing:0.712px;line-height:14px;height:14px;">October</div>
<div class="t" style="left:795.20px;top:271px;font-size:10.5px;color:#000;letter-spacing:0.883px;line-height:14px;height:14px;">November</div>
<div class="t" style="left:862.40px;top:271px;font-size:10.5px;color:#000;letter-spacing:0.883px;line-height:14px;height:14px;">December</div>
<div class="t" style="left:929.20px;top:271px;font-size:10.5px;color:#000;letter-spacing:1.135px;line-height:14px;height:14px;">Total</div>
<div class="t" style="left:453.10px;top:235px;font-size:17.8px;color:#000;letter-spacing:0.182px;line-height:22px;height:22px;">Sales Statistics</div>
<div class="t" style="left:28.70px;top:287px;font-size:10.5px;color:#000;letter-spacing:0.947px;line-height:14px;height:14px;">Magasin 1</div>
<div class="t" style="left:28.70px;top:303px;font-size:10.5px;color:#000;letter-spacing:1.303px;line-height:14px;height:14px;">Alimentation</div>
<div class="c n" style="left:122px;width:57px;top:302px">25<i class="g"></i>728</div>
<div class="c n" style="left:189px;width:57px;top:302px">26<i class="g"></i>724</div>
<div class="c n" style="left:256px;width:57px;top:302px">27<i class="g"></i>720</div>
<div class="c n" style="left:323px;width:57px;top:302px">28<i class="g"></i>716</div>
<div class="c n" style="left:390px;width:57px;top:302px">29<i class="g"></i>712</div>
<div class="c n" style="left:457px;width:57px;top:302px">30<i class="g"></i>708</div>
<div class="c n" style="left:524px;width:57px;top:302px">31<i class="g"></i>704</div>
<div class="c n" style="left:591px;width:57px;top:302px">32<i class="g"></i>700</div>
<div class="c n" style="left:658px;width:57px;top:302px">33<i class="g"></i>696</div>
<div class="c n" style="left:725px;width:57px;top:302px">34<i class="g"></i>692</div>
<div class="c n" style="left:792px;width:57px;top:302px">35<i class="g"></i>688</div>
<div class="c n" style="left:859px;width:57px;top:302px">36<i class="g"></i>684</div>
<div class="c nn" style="left:926px;width:62px;top:302px">374<i class="g2"></i>472</div>
<div class="t" style="left:28.70px;top:319px;font-size:10.5px;color:#000;letter-spacing:0.647px;line-height:14px;height:14px;">Bazar</div>
<div class="c n" style="left:122px;width:57px;top:318px">11<i class="g"></i>582</div>
<div class="c n" style="left:189px;width:57px;top:318px">11<i class="g"></i>398</div>
<div class="c n" style="left:256px;width:57px;top:318px">11<i class="g"></i>214</div>
<div class="c n" style="left:323px;width:57px;top:318px">11<i class="g"></i>030</div>
<div class="c n" style="left:390px;width:57px;top:318px">10<i class="g"></i>846</div>
<div class="c n" style="left:457px;width:57px;top:318px">10<i class="g"></i>662</div>
<div class="c n" style="left:524px;width:57px;top:318px">10<i class="g"></i>478</div>
<div class="c n" style="left:591px;width:57px;top:318px">10<i class="g"></i>294</div>
<div class="c n" style="left:658px;width:57px;top:318px">10<i class="g"></i>110</div>
<div class="c n" style="left:725px;width:57px;top:318px">9<i class="g"></i>926</div>
<div class="c n" style="left:792px;width:57px;top:318px">9<i class="g"></i>742</div>
<div class="c n" style="left:859px;width:57px;top:318px">9<i class="g"></i>558</div>
<div class="c nn" style="left:926px;width:62px;top:318px">126<i class="g2"></i>840</div>
<div class="t" style="left:28.70px;top:335px;font-size:10.5px;color:#000;letter-spacing:1.243px;line-height:14px;height:14px;">Textile</div>
<div class="c n" style="left:122px;width:57px;top:334px">7<i class="g"></i>689</div>
<div class="c n" style="left:189px;width:57px;top:334px">8<i class="g"></i>745</div>
<div class="c n" style="left:256px;width:57px;top:334px">9<i class="g"></i>801</div>
<div class="c n" style="left:323px;width:57px;top:334px">10<i class="g"></i>857</div>
<div class="c n" style="left:390px;width:57px;top:334px">11<i class="g"></i>913</div>
<div class="c n" style="left:457px;width:57px;top:334px">12<i class="g"></i>969</div>
<div class="c n" style="left:524px;width:57px;top:334px">14<i class="g"></i>025</div>
<div class="c n" style="left:591px;width:57px;top:334px">15<i class="g"></i>081</div>
<div class="c n" style="left:658px;width:57px;top:334px">16<i class="g"></i>137</div>
<div class="c n" style="left:725px;width:57px;top:334px">17<i class="g"></i>193</div>
<div class="c n" style="left:792px;width:57px;top:334px">18<i class="g"></i>249</div>
<div class="c n" style="left:859px;width:57px;top:334px">19<i class="g"></i>305</div>
<div class="c nn" style="left:926px;width:62px;top:334px">161<i class="g2"></i>964</div>
<div class="t" style="left:28.70px;top:351px;font-size:10.5px;color:#000;letter-spacing:0.025px;line-height:14px;height:14px;font-weight:bold;">Store Total 1</div>
<div class="c n b" style="left:122px;width:57.7px;top:350px">44<i class="g"></i>999</div>
<div class="c n b" style="left:189px;width:57.7px;top:350px">46<i class="g"></i>867</div>
<div class="c n b" style="left:256px;width:57.7px;top:350px">48<i class="g"></i>735</div>
<div class="c n b" style="left:323px;width:57.7px;top:350px">50<i class="g"></i>603</div>
<div class="c n b" style="left:390px;width:57.7px;top:350px">52<i class="g"></i>471</div>
<div class="c n b" style="left:457px;width:57.7px;top:350px">54<i class="g"></i>339</div>
<div class="c n b" style="left:524px;width:57.7px;top:350px">56<i class="g"></i>207</div>
<div class="c n b" style="left:591px;width:57.7px;top:350px">58<i class="g"></i>075</div>
<div class="c n b" style="left:658px;width:57.7px;top:350px">59<i class="g"></i>943</div>
<div class="c n b" style="left:725px;width:57.7px;top:350px">61<i class="g"></i>811</div>
<div class="c n b" style="left:792px;width:57.7px;top:350px">63<i class="g"></i>679</div>
<div class="c n b" style="left:859px;width:57.7px;top:350px">65<i class="g"></i>547</div>
<div class="c nn b" style="left:926px;width:62.7px;top:350px">663<i class="g2"></i>276</div>
<div class="t" style="left:28.70px;top:367px;font-size:10.5px;color:#000;letter-spacing:0.578px;line-height:14px;height:14px;">Store 2</div>
<div class="t" style="left:28.70px;top:383px;font-size:10.5px;color:#000;letter-spacing:0.762px;line-height:14px;height:14px;">Food</div>
<div class="c n" style="left:122px;width:57px;top:382px">20<i class="g"></i>598</div>
<div class="c n" style="left:189px;width:57px;top:382px">21<i class="g"></i>570</div>
<div class="c n" style="left:256px;width:57px;top:382px">22<i class="g"></i>542</div>
<div class="c n" style="left:323px;width:57px;top:382px">23<i class="g"></i>514</div>
<div class="c n" style="left:390px;width:57px;top:382px">24<i class="g"></i>486</div>
<div class="c n" style="left:457px;width:57px;top:382px">25<i class="g"></i>458</div>
<div class="c n" style="left:524px;width:57px;top:382px">26<i class="g"></i>430</div>
<div class="c n" style="left:591px;width:57px;top:382px">27<i class="g"></i>402</div>
<div class="c n" style="left:658px;width:57px;top:382px">28<i class="g"></i>374</div>
<div class="c n" style="left:725px;width:57px;top:382px">29<i class="g"></i>346</div>
<div class="c n" style="left:792px;width:57px;top:382px">30<i class="g"></i>318</div>
<div class="c n" style="left:859px;width:57px;top:382px">31<i class="g"></i>290</div>
<div class="c nn" style="left:926px;width:62px;top:382px">311<i class="g2"></i>328</div>
<div class="t" style="left:28.70px;top:399px;font-size:10.5px;color:#000;letter-spacing:0.690px;line-height:14px;height:14px;">Bazaar</div>
<div class="c n" style="left:122px;width:57px;top:398px">12<i class="g"></i>459</div>
<div class="c n" style="left:189px;width:57px;top:398px">13<i class="g"></i>587</div>
<div class="c n" style="left:256px;width:57px;top:398px">14<i class="g"></i>715</div>
<div class="c n" style="left:323px;width:57px;top:398px">15<i class="g"></i>843</div>
<div class="c n" style="left:390px;width:57px;top:398px">16<i class="g"></i>971</div>
<div class="c n" style="left:457px;width:57px;top:398px">18<i class="g"></i>099</div>
<div class="c n" style="left:524px;width:57px;top:398px">19<i class="g"></i>227</div>
<div class="c n" style="left:591px;width:57px;top:398px">20<i class="g"></i>355</div>
<div class="c n" style="left:658px;width:57px;top:398px">21<i class="g"></i>483</div>
<div class="c n" style="left:725px;width:57px;top:398px">22<i class="g"></i>611</div>
<div class="c n" style="left:792px;width:57px;top:398px">23<i class="g"></i>739</div>
<div class="c n" style="left:859px;width:57px;top:398px">24<i class="g"></i>867</div>
<div class="c nn" style="left:926px;width:62px;top:398px">223<i class="g2"></i>956</div>
<div class="t" style="left:28.70px;top:415px;font-size:10.5px;color:#000;letter-spacing:1.243px;line-height:14px;height:14px;">Textile</div>
<div class="c n" style="left:122px;width:57px;top:414px">9<i class="g"></i>863</div>
<div class="c n" style="left:189px;width:57px;top:414px">9<i class="g"></i>785</div>
<div class="c n" style="left:256px;width:57px;top:414px">9<i class="g"></i>707</div>
<div class="c n" style="left:323px;width:57px;top:414px">9<i class="g"></i>629</div>
<div class="c n" style="left:390px;width:57px;top:414px">9<i class="g"></i>551</div>
<div class="c n" style="left:457px;width:57px;top:414px">9<i class="g"></i>473</div>
<div class="c n" style="left:524px;width:57px;top:414px">9<i class="g"></i>395</div>
<div class="c n" style="left:591px;width:57px;top:414px">9<i class="g"></i>317</div>
<div class="c n" style="left:658px;width:57px;top:414px">9<i class="g"></i>239</div>
<div class="c n" style="left:725px;width:57px;top:414px">9<i class="g"></i>161</div>
<div class="c n" style="left:792px;width:57px;top:414px">9<i class="g"></i>083</div>
<div class="c n" style="left:859px;width:57px;top:414px">9<i class="g"></i>005</div>
<div class="c nn" style="left:926px;width:62px;top:414px">113<i class="g2"></i>208</div>
<div class="t" style="left:28.70px;top:431px;font-size:10.5px;color:#000;letter-spacing:0.025px;line-height:14px;height:14px;font-weight:bold;">Store Total 2</div>
<div class="c n b" style="left:122px;width:57.7px;top:430px">42<i class="g"></i>920</div>
<div class="c n b" style="left:189px;width:57.7px;top:430px">44<i class="g"></i>942</div>
<div class="c n b" style="left:256px;width:57.7px;top:430px">46<i class="g"></i>964</div>
<div class="c n b" style="left:323px;width:57.7px;top:430px">48<i class="g"></i>986</div>
<div class="c n b" style="left:390px;width:57.7px;top:430px">51<i class="g"></i>008</div>
<div class="c n b" style="left:457px;width:57.7px;top:430px">53<i class="g"></i>030</div>
<div class="c n b" style="left:524px;width:57.7px;top:430px">55<i class="g"></i>052</div>
<div class="c n b" style="left:591px;width:57.7px;top:430px">57<i class="g"></i>074</div>
<div class="c n b" style="left:658px;width:57.7px;top:430px">59<i class="g"></i>096</div>
<div class="c n b" style="left:725px;width:57.7px;top:430px">61<i class="g"></i>118</div>
<div class="c n b" style="left:792px;width:57.7px;top:430px">63<i class="g"></i>140</div>
<div class="c n b" style="left:859px;width:57.7px;top:430px">65<i class="g"></i>162</div>
<div class="c nn b" style="left:926px;width:62.7px;top:430px">648<i class="g2"></i>492</div>
<div class="t" style="left:28.70px;top:447px;font-size:10.5px;color:#000;letter-spacing:0.578px;line-height:14px;height:14px;">Store 3</div>
<div class="t" style="left:28.70px;top:463px;font-size:10.5px;color:#000;letter-spacing:0.762px;line-height:14px;height:14px;">Food</div>
<div class="c n" style="left:122px;width:57px;top:462px">36<i class="g"></i>584</div>
<div class="c n" style="left:189px;width:57px;top:462px">37<i class="g"></i>922</div>
<div class="c n" style="left:256px;width:57px;top:462px">39<i class="g"></i>260</div>
<div class="c n" style="left:323px;width:57px;top:462px">40<i class="g"></i>598</div>
<div class="c n" style="left:390px;width:57px;top:462px">41<i class="g"></i>936</div>
<div class="c n" style="left:457px;width:57px;top:462px">43<i class="g"></i>274</div>
<div class="c n" style="left:524px;width:57px;top:462px">44<i class="g"></i>612</div>
<div class="c n" style="left:591px;width:57px;top:462px">45<i class="g"></i>950</div>
<div class="c n" style="left:658px;width:57px;top:462px">47<i class="g"></i>288</div>
<div class="c n" style="left:725px;width:57px;top:462px">48<i class="g"></i>626</div>
<div class="c n" style="left:792px;width:57px;top:462px">49<i class="g"></i>964</div>
<div class="c n" style="left:859px;width:57px;top:462px">51<i class="g"></i>302</div>
<div class="c nn" style="left:926px;width:62px;top:462px">527<i class="g2"></i>316</div>
<div class="t" style="left:28.70px;top:479px;font-size:10.5px;color:#000;letter-spacing:0.690px;line-height:14px;height:14px;">Bazaar</div>
<div class="c n" style="left:122px;width:57px;top:478px">15<i class="g"></i>236</div>
<div class="c n" style="left:189px;width:57px;top:478px">15<i class="g"></i>389</div>
<div class="c n" style="left:256px;width:57px;top:478px">15<i class="g"></i>542</div>
<div class="c n" style="left:323px;width:57px;top:478px">15<i class="g"></i>695</div>
<div class="c n" style="left:390px;width:57px;top:478px">15<i class="g"></i>848</div>
<div class="c n" style="left:457px;width:57px;top:478px">16<i class="g"></i>001</div>
<div class="c n" style="left:524px;width:57px;top:478px">16<i class="g"></i>154</div>
<div class="c n" style="left:591px;width:57px;top:478px">16<i class="g"></i>307</div>
<div class="c n" style="left:658px;width:57px;top:478px">16<i class="g"></i>460</div>
<div class="c n" style="left:725px;width:57px;top:478px">16<i class="g"></i>613</div>
<div class="c n" style="left:792px;width:57px;top:478px">16<i class="g"></i>766</div>
<div class="c n" style="left:859px;width:57px;top:478px">16<i class="g"></i>919</div>
<div class="c nn" style="left:926px;width:62px;top:478px">192<i class="g2"></i>930</div>
<div class="t" style="left:28.70px;top:495px;font-size:10.5px;color:#000;letter-spacing:1.243px;line-height:14px;height:14px;">Textile</div>
<div class="c n" style="left:122px;width:57px;top:494px">12<i class="g"></i>987</div>
<div class="c n" style="left:189px;width:57px;top:494px">12<i class="g"></i>564</div>
<div class="c n" style="left:256px;width:57px;top:494px">12<i class="g"></i>141</div>
<div class="c n" style="left:323px;width:57px;top:494px">11<i class="g"></i>718</div>
<div class="c n" style="left:390px;width:57px;top:494px">11<i class="g"></i>295</div>
<div class="c n" style="left:457px;width:57px;top:494px">10<i class="g"></i>872</div>
<div class="c n" style="left:524px;width:57px;top:494px">10<i class="g"></i>449</div>
<div class="c n" style="left:591px;width:57px;top:494px">10<i class="g"></i>026</div>
<div class="c n" style="left:658px;width:57px;top:494px">9<i class="g"></i>603</div>
<div class="c n" style="left:725px;width:57px;top:494px">9<i class="g"></i>180</div>
<div class="c n" style="left:792px;width:57px;top:494px">8<i class="g"></i>757</div>
<div class="c n" style="left:859px;width:57px;top:494px">8<i class="g"></i>334</div>
<div class="c nn" style="left:926px;width:62px;top:494px">127<i class="g2"></i>926</div>
<div class="t" style="left:28.70px;top:511px;font-size:10.5px;color:#000;letter-spacing:0.025px;line-height:14px;height:14px;font-weight:bold;">Store Total 3</div>
<div class="c n b" style="left:122px;width:57.7px;top:510px">64<i class="g"></i>807</div>
<div class="c n b" style="left:189px;width:57.7px;top:510px">65<i class="g"></i>875</div>
<div class="c n b" style="left:256px;width:57.7px;top:510px">66<i class="g"></i>943</div>
<div class="c n b" style="left:323px;width:57.7px;top:510px">68<i class="g"></i>011</div>
<div class="c n b" style="left:390px;width:57.7px;top:510px">69<i class="g"></i>079</div>
<div class="c n b" style="left:457px;width:57.7px;top:510px">70<i class="g"></i>147</div>
<div class="c n b" style="left:524px;width:57.7px;top:510px">71<i class="g"></i>215</div>
<div class="c n b" style="left:591px;width:57.7px;top:510px">72<i class="g"></i>283</div>
<div class="c n b" style="left:658px;width:57.7px;top:510px">73<i class="g"></i>351</div>
<div class="c n b" style="left:725px;width:57.7px;top:510px">74<i class="g"></i>419</div>
<div class="c n b" style="left:792px;width:57.7px;top:510px">75<i class="g"></i>487</div>
<div class="c n b" style="left:859px;width:57.7px;top:510px">76<i class="g"></i>555</div>
<div class="c nn b" style="left:926px;width:62.7px;top:510px">848<i class="g2"></i>172</div>
<div class="t" style="left:28.70px;top:527px;font-size:10.5px;color:#000;letter-spacing:0.022px;line-height:14px;height:14px;font-weight:bold;">Grand total</div>
<div class="c n b" style="left:122px;width:57.7px;top:526px">152<i class="g"></i>726</div>
<div class="c n b" style="left:189px;width:57.7px;top:526px">157<i class="g"></i>684</div>
<div class="c n b" style="left:256px;width:57.7px;top:526px">162<i class="g"></i>642</div>
<div class="c n b" style="left:323px;width:57.7px;top:526px">167<i class="g"></i>600</div>
<div class="c n b" style="left:390px;width:57.7px;top:526px">172<i class="g"></i>558</div>
<div class="c n b" style="left:457px;width:57.7px;top:526px">177<i class="g"></i>516</div>
<div class="c n b" style="left:524px;width:57.7px;top:526px">182<i class="g"></i>474</div>
<div class="c n b" style="left:591px;width:57.7px;top:526px">187<i class="g"></i>432</div>
<div class="c n b" style="left:658px;width:57.7px;top:526px">192<i class="g"></i>390</div>
<div class="c n b" style="left:725px;width:57.7px;top:526px">197<i class="g"></i>348</div>
<div class="c n b" style="left:792px;width:57.7px;top:526px">202<i class="g"></i>306</div>
<div class="c n b" style="left:859px;width:57.7px;top:526px">207<i class="g"></i>264</div>
<div class="c nn b" style="left:926px;width:62.7px;top:526px">2<i class="g2"></i>159<i class="g2"></i>940</div>
<div class="abs" style="left:27px;top:285px;width:972px;height:1px;background:#000;"></div>
<div class="abs" style="left:27px;top:301px;width:972px;height:1px;background:#000;"></div>
<div class="abs" style="left:27px;top:317px;width:972px;height:1px;background:#000;"></div>
<div class="abs" style="left:27px;top:333px;width:972px;height:1px;background:#000;"></div>
<div class="abs" style="left:27px;top:349px;width:972px;height:1px;background:#000;"></div>
<div class="abs" style="left:27px;top:365px;width:972px;height:1px;background:#000;"></div>
<div class="abs" style="left:27px;top:381px;width:972px;height:1px;background:#000;"></div>
<div class="abs" style="left:27px;top:397px;width:972px;height:1px;background:#000;"></div>
<div class="abs" style="left:27px;top:413px;width:972px;height:1px;background:#000;"></div>
<div class="abs" style="left:27px;top:429px;width:972px;height:1px;background:#000;"></div>
<div class="abs" style="left:27px;top:445px;width:972px;height:1px;background:#000;"></div>
<div class="abs" style="left:27px;top:461px;width:972px;height:1px;background:#000;"></div>
<div class="abs" style="left:27px;top:477px;width:972px;height:1px;background:#000;"></div>
<div class="abs" style="left:27px;top:493px;width:972px;height:1px;background:#000;"></div>
<div class="abs" style="left:27px;top:509px;width:972px;height:1px;background:#000;"></div>
<div class="abs" style="left:27px;top:525px;width:972px;height:1px;background:#000;"></div>
<div class="abs" style="left:27px;top:541px;width:972px;height:1px;background:#000;"></div>
<div class="abs" style="left:122px;top:270px;width:1px;height:272px;background:#000;"></div>
<div class="abs" style="left:189px;top:270px;width:1px;height:272px;background:#000;"></div>
<div class="abs" style="left:256px;top:270px;width:1px;height:272px;background:#000;"></div>
<div class="abs" style="left:323px;top:270px;width:1px;height:272px;background:#000;"></div>
<div class="abs" style="left:390px;top:270px;width:1px;height:272px;background:#000;"></div>
<div class="abs" style="left:457px;top:270px;width:1px;height:272px;background:#000;"></div>
<div class="abs" style="left:524px;top:270px;width:1px;height:272px;background:#000;"></div>
<div class="abs" style="left:591px;top:270px;width:1px;height:272px;background:#000;"></div>
<div class="abs" style="left:658px;top:270px;width:1px;height:272px;background:#000;"></div>
<div class="abs" style="left:725px;top:270px;width:1px;height:272px;background:#000;"></div>
<div class="abs" style="left:792px;top:270px;width:1px;height:272px;background:#000;"></div>
<div class="abs" style="left:859px;top:270px;width:1px;height:272px;background:#000;"></div>
<div class="abs" style="left:926px;top:270px;width:1px;height:272px;background:#000;"></div>
<div class="abs" style="left:27px;top:557px;width:972px;height:1px;background:#d4d4d4;"></div>
<div class="abs" style="left:122px;top:542px;width:1px;height:24px;background:#d4d4d4;"></div>
<div class="abs" style="left:189px;top:542px;width:1px;height:24px;background:#d4d4d4;"></div>
<div class="abs" style="left:256px;top:542px;width:1px;height:24px;background:#d4d4d4;"></div>
<div class="abs" style="left:323px;top:542px;width:1px;height:24px;background:#d4d4d4;"></div>
<div class="abs" style="left:390px;top:542px;width:1px;height:24px;background:#d4d4d4;"></div>
<div class="abs" style="left:457px;top:542px;width:1px;height:24px;background:#d4d4d4;"></div>
<div class="abs" style="left:524px;top:542px;width:1px;height:24px;background:#d4d4d4;"></div>
<div class="abs" style="left:591px;top:542px;width:1px;height:24px;background:#d4d4d4;"></div>
<div class="abs" style="left:658px;top:542px;width:1px;height:24px;background:#d4d4d4;"></div>
<div class="abs" style="left:725px;top:542px;width:1px;height:24px;background:#d4d4d4;"></div>
<div class="abs" style="left:792px;top:542px;width:1px;height:24px;background:#d4d4d4;"></div>
<div class="abs" style="left:859px;top:542px;width:1px;height:24px;background:#d4d4d4;"></div>
<div class="abs" style="left:926px;top:542px;width:1px;height:24px;background:#d4d4d4;"></div>
<div class="abs" style="left:999px;top:219px;width:1px;height:348px;background:#ababab;"></div>
<div class="abs" style="left:25px;top:219px;width:974px;height:52px;border:2px solid #217346;border-right:none"></div>
<div class="abs" style="left:1003px;top:222px;width:15px;height:331px;background:#d4d4d4;"></div>
<div class="abs" style="left:1003px;top:207px;width:15px;height:15px;background:#fff;border:1px solid #ababab"></div>
<svg class="abs" style="left:1007px;top:212px" width="7" height="4" viewBox="0 0 7 4"><path d="M0 4H7L3.5 0Z" fill="#777"/></svg>
<div class="abs" style="left:1003px;top:222px;width:15px;height:313px;background:#fff;border:1px solid #ababab"></div>
<div class="abs" style="left:1003px;top:552px;width:15px;height:15px;background:#fff;border:1px solid #ababab"></div>
<svg class="abs" style="left:1007px;top:558px" width="7" height="4" viewBox="0 0 7 4"><path d="M0 0H7L3.5 4Z" fill="#777"/></svg>
<div class="abs" style="left:1px;top:566px;width:1020px;height:28px;background:#e6e6e6;"></div>
<div class="abs" style="left:1px;top:566px;width:999px;height:1px;background:#ababab;"></div>
<div class="abs" style="left:102px;top:566px;width:63px;height:23px;background:#fff;"></div>
<div class="abs" style="left:101px;top:589px;width:65px;height:2px;background:#217346;"></div>
<div class="abs" style="left:101px;top:566px;width:1px;height:23px;background:#a0a0a0;"></div>
<div class="abs" style="left:165px;top:566px;width:1px;height:23px;background:#a0a0a0;"></div>
<div class="t" style="left:112.60px;top:572px;font-size:12.6px;color:#217346;letter-spacing:-0.080px;line-height:16px;height:16px;font-weight:bold;">Sheet1</div>
<svg class="abs" style="left:28px;top:576px" width="5" height="7" viewBox="0 0 5 7"><path d="M4.6 0V7L0.4 3.5Z" fill="#c2c2c2"/></svg>
<svg class="abs" style="left:56px;top:576px" width="5" height="7" viewBox="0 0 5 7"><path d="M0.4 0V7L4.6 3.5Z" fill="#c2c2c2"/></svg>
<svg class="abs" style="left:198px;top:572px" width="17" height="17" viewBox="0 0 17 17"><circle cx="9" cy="7.9" r="7.4" fill="none" stroke="#858585" stroke-width="1.3"/><path d="M9 4V12M5 8H13" stroke="#727272" stroke-width="2"/></svg>
<div class="abs" style="left:613px;top:576px;width:2px;height:2px;background:#b5b5b5;"></div>
<div class="abs" style="left:613px;top:580px;width:2px;height:2px;background:#b5b5b5;"></div>
<div class="abs" style="left:613px;top:584px;width:2px;height:2px;background:#b5b5b5;"></div>
<div class="abs" style="left:630px;top:573px;width:370px;height:15px;background:#d9d9d9;"></div>
<div class="abs" style="left:630px;top:573px;width:15px;height:15px;background:#fff;border:1px solid #ababab"></div>
<svg class="abs" style="left:635px;top:577px" width="4" height="7" viewBox="0 0 4 7"><path d="M4 0V7L0 3.5Z" fill="#555"/></svg>
<div class="abs" style="left:645px;top:573px;width:17px;height:15px;background:#fff;border:1px solid #ababab"></div>
<div class="abs" style="left:985px;top:573px;width:15px;height:15px;background:#fff;border:1px solid #ababab"></div>
<svg class="abs" style="left:991px;top:577px" width="4" height="7" viewBox="0 0 4 7"><path d="M0 0V7L4 3.5Z" fill="#555"/></svg>
<div class="abs" style="left:1px;top:594px;width:1020px;height:1px;background:#c9c9c9;"></div>
<div class="abs" style="left:1px;top:595px;width:1020px;height:21px;background:#f1f1f1;"></div>
<div class="t" style="left:7.80px;top:598px;font-size:11.3px;color:#4a4a4a;letter-spacing:-0.361px;line-height:14px;height:14px;">Ready</div>
<div class="t" style="left:57.90px;top:598px;font-size:11.3px;color:#4a4a4a;letter-spacing:-0.150px;line-height:14px;height:14px;">Num Lock</div>
<svg class="abs" style="left:125px;top:598px" width="13" height="14" viewBox="0 0 13 14"><circle cx="3.2" cy="3.2" r="3" fill="#555"/><path d="M7 1.4H12.2V12.6H1.2V7" fill="none" stroke="#555" stroke-width="1"/><path d="M3 8.6H5M6.2 8.6H8.2M9.4 8.6H11M3 10.8H5M6.2 10.8H8.2M9.4 10.8H11M7.4 4H11M7.4 6H11" stroke="#555" stroke-width="1"/></svg>
<div class="abs" style="left:721px;top:595px;width:38px;height:21px;background:#c8c8c8;"></div>
<svg class="abs" style="left:733px;top:598px" width="13" height="13" viewBox="0 0 13 13"><rect x="0.5" y="0.5" width="12" height="12" fill="#d6d6d6"/><path d="M0.5 0.5H12.5V12.5H0.5ZM0.5 4.5H12.5M0.5 8.5H12.5M4.5 0.5V12.5M8.5 0.5V12.5" fill="none" stroke="#6a6a6a" stroke-width="1.1"/></svg>
<svg class="abs" style="left:771px;top:598px" width="14" height="13" viewBox="0 0 14 13"><rect x="0.5" y="0.5" width="13" height="12" fill="none" stroke="#666" stroke-width="1.1"/><rect x="3.5" y="3" width="7" height="7.4" fill="none" stroke="#666" stroke-width="1"/><path d="M5.2 5H8.8M5.2 6.8H8.8M5.2 8.6H8.8" stroke="#666" stroke-width="0.9"/></svg>
<svg class="abs" style="left:809px;top:598px" width="14" height="13" viewBox="0 0 14 13"><rect x="0.5" y="0.5" width="13" height="12" fill="none" stroke="#666" stroke-width="1.1"/><path d="M4.6 0.5V6.5H0.5M8.4 0.5V6.5H4.6" fill="none" stroke="#666" stroke-width="1"/></svg>
<div class="abs" style="left:840px;top:604px;width:6px;height:2px;background:#555;"></div>
<div class="abs" style="left:850px;top:604px;width:100px;height:1px;background:#9a9a9a;"></div>
<div class="abs" style="left:888px;top:599px;width:4px;height:11px;background:#555;"></div>
<div class="abs" style="left:900px;top:602px;width:1px;height:6px;background:#9a9a9a;"></div>
<svg class="abs" style="left:954px;top:601px" width="8" height="8" viewBox="0 0 8 8"><path d="M4 0V8M0 4H8" stroke="#555" stroke-width="1.8"/></svg>
<div class="t" style="left:977.40px;top:597px;font-size:11.3px;color:#4a4a4a;letter-spacing:-0.479px;line-height:14px;height:14px;">80 %</div>
<div class="abs" style="left:0px;top:0px;width:1px;height:617px;background:#217346;"></div>
<div class="abs" style="left:1021px;top:0px;width:1px;height:617px;background:#217346;"></div>
<div class="abs" style="left:0px;top:616px;width:1022px;height:1px;background:#217346;"></div>
</div></body></html>
